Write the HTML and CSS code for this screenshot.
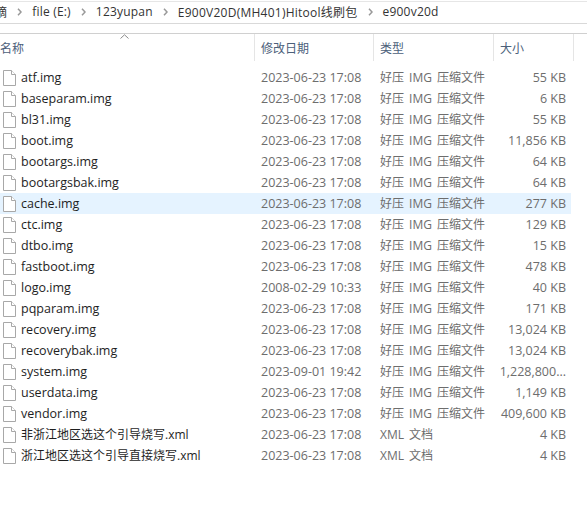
FILE: index.html
```html
<!DOCTYPE html>
<html lang="zh-CN">

<head>
    <meta charset="UTF-8">
    <title>e900v20d</title>
    <link rel="stylesheet" href="styles.css">
</head>

<body>
    <nav class="crumbs">
        <span class="crumb crumb-cut">摘</span>
        <svg class="chevron" viewBox="0 0 5 8"><path d="M1 0.8 L4 4 L1 7.2" /></svg>
        <span class="crumb">file (E:)</span>
        <svg class="chevron" viewBox="0 0 5 8"><path d="M1 0.8 L4 4 L1 7.2" /></svg>
        <span class="crumb">123yupan</span>
        <svg class="chevron" viewBox="0 0 5 8"><path d="M1 0.8 L4 4 L1 7.2" /></svg>
        <span class="crumb crumb-long">E900V20D(MH401)Hitool线刷包</span>
        <svg class="chevron" viewBox="0 0 5 8"><path d="M1 0.8 L4 4 L1 7.2" /></svg>
        <span class="crumb">e900v20d</span>
    </nav>

    <div class="head">
        <svg class="sort" viewBox="0 0 9 5"><path d="M0.5 4.5 L4.5 0.8 L8.5 4.5" /></svg>
        <div class="col col-name">名称</div>
        <div class="col">修改日期</div>
        <div class="col">类型</div>
        <div class="col">大小</div>
    </div>

    <div id="rows" class="rows"></div>

    <script>
        const IMG = "好压 IMG 压缩文件";
        const XML = "XML 文档";
        const files = [
            ["atf.img", "2023-06-23 17:08", IMG, "55 KB"],
            ["baseparam.img", "2023-06-23 17:08", IMG, "6 KB"],
            ["bl31.img", "2023-06-23 17:08", IMG, "55 KB"],
            ["boot.img", "2023-06-23 17:08", IMG, "11,856 KB"],
            ["bootargs.img", "2023-06-23 17:08", IMG, "64 KB"],
            ["bootargsbak.img", "2023-06-23 17:08", IMG, "64 KB"],
            ["cache.img", "2023-06-23 17:08", IMG, "277 KB"],
            ["ctc.img", "2023-06-23 17:08", IMG, "129 KB"],
            ["dtbo.img", "2023-06-23 17:08", IMG, "15 KB"],
            ["fastboot.img", "2023-06-23 17:08", IMG, "478 KB"],
            ["logo.img", "2008-02-29 10:33", IMG, "40 KB"],
            ["pqparam.img", "2023-06-23 17:08", IMG, "171 KB"],
            ["recovery.img", "2023-06-23 17:08", IMG, "13,024 KB"],
            ["recoverybak.img", "2023-06-23 17:08", IMG, "13,024 KB"],
            ["system.img", "2023-09-01 19:42", IMG, "1,228,800..."],
            ["userdata.img", "2023-06-23 17:08", IMG, "1,149 KB"],
            ["vendor.img", "2023-06-23 17:08", IMG, "409,600 KB"],
            ["非浙江地区选这个引导烧写.xml", "2023-06-23 17:08", XML, "4 KB"],
            ["浙江地区选这个引导直接烧写.xml", "2023-06-23 17:08", XML, "4 KB"]
        ];
        const icon = '<svg class="file-icon" viewBox="0 0 13 16"><path d="M0.5 0.5 H8.5 L12.5 4.5 V15.5 H0.5 Z" /><path d="M8.5 0.5 V4.5 H12.5" /></svg>';

        let html = "";
        for (const f of files) {
            const hot = f[0] === "cache.img" ? " row-hot" : "";
            const latin = f[2] === IMG ? " cell-latin" : "";
            html += `<div class="row${hot}">` +
                `<div class="cell cell-name${latin}">${icon}<span>${f[0]}</span></div>` +
                `<div class="cell cell-date">${f[1]}</div>` +
                `<div class="cell cell-type">${f[2]}</div>` +
                `<div class="cell cell-size">${f[3]}</div>` +
                `</div>`;
        }
        document.getElementById("rows").innerHTML = html;
    </script>
</body>

</html>
```

FILE: styles.css
```css
* {
    box-sizing: border-box;
}

body {
    margin: 0;
    background: #fff;
    color: #1e1e1e;
    font-family: "Open Sans", "Noto Sans CJK SC", sans-serif;
    font-size: 12px;
    overflow: hidden;
}

.crumbs {
    display: flex;
    align-items: center;
    gap: 10px;
    height: 23px;
    margin-top: 1px;
    padding-bottom: 2px;
    border-top: 1px solid #e6e6e6;
    border-bottom: 1px solid #d9d9d9;
    color: #333;
    white-space: nowrap;
    letter-spacing: 0.2px;
}

.crumb-cut {
    margin-left: -5px;
}

.crumb-long {
    letter-spacing: 0.25px;
}

.chevron {
    width: 5px;
    height: 8px;
    flex: none;
    fill: none;
    stroke: #999;
    stroke-width: 1.5;
}

.head {
    position: relative;
    display: grid;
    grid-template-columns: 255px 119px 120px 80px;
    height: 28px;
    margin-top: 9px;
    border-top: 1px solid #d0d0d0;
    color: #4c607a;
}

.col {
    display: flex;
    align-items: center;
    height: 27px;
    padding-left: 6px;
    border-right: 1px solid #e5e5e5;
}

.col-name {
    padding-left: 0;
}

.sort {
    position: absolute;
    left: 120px;
    top: 0;
    width: 9px;
    height: 5px;
    fill: none;
    stroke: #8a8a8a;
}

.rows {
    margin-top: 6px;
}

.row {
    display: grid;
    grid-template-columns: 255px 119px 120px 77px;
    width: 571px;
    height: 21px;
    line-height: 21px;
    white-space: nowrap;
}

.row-hot {
    background: #e5f3ff;
}

.cell {
    overflow: hidden;
    color: #6d6d6d;
    padding-left: 6px;
}

.cell-name {
    display: flex;
    align-items: center;
    gap: 5px;
    padding-left: 3px;
    color: #1e1e1e;
}

.cell-latin,
.cell-date,
.cell-size {
    font-size: 12.5px;
}

.cell-type {
    word-spacing: 2px;
}

.cell-size {
    padding: 0 5px 0 0;
    text-align: right;
}

.file-icon {
    width: 13px;
    height: 16px;
    flex: none;
    fill: #fff;
    stroke: #a8a8a8;
}
```
